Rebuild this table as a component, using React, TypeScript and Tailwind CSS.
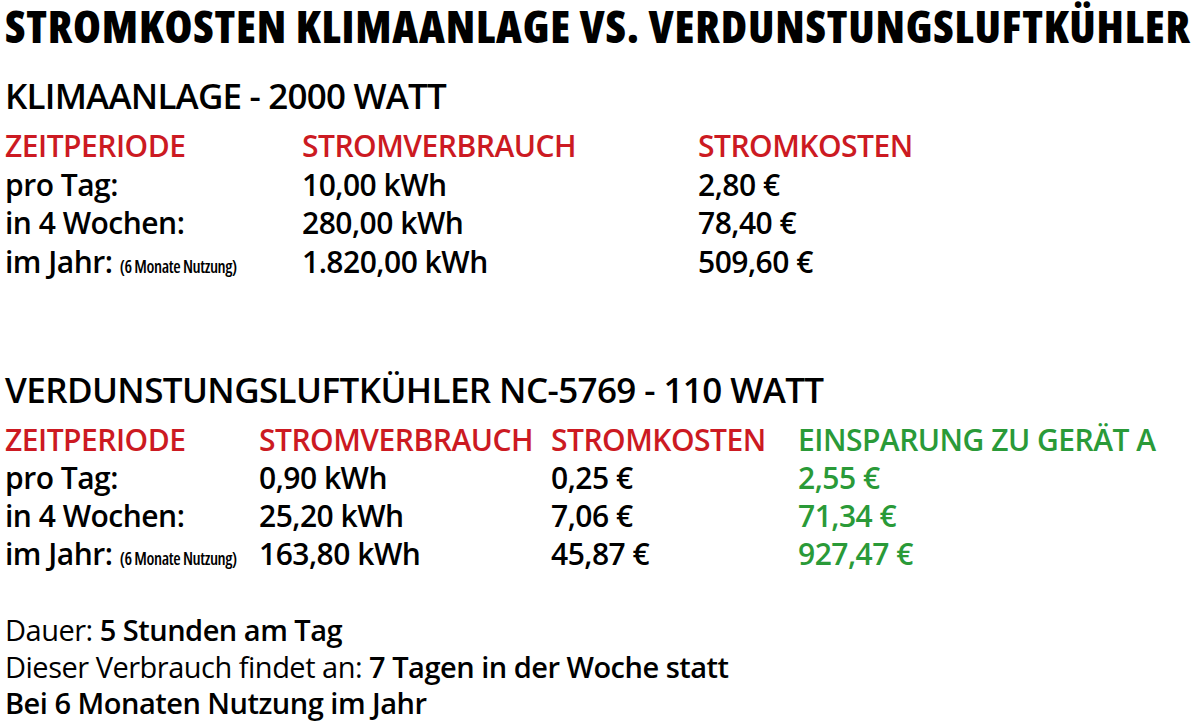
import React from 'react';

const red = 'text-[#cc1a22]';
const green = 'text-[#2a9a38]';

function Small() {
  return (
    <span className="text-[17px] font-semibold tracking-[-0.4px] [font-stretch:75%]">
      (6 Monate Nutzung)
    </span>
  );
}

export default function App() {
  return (
    <div
      className="w-[1200px] h-[725px] bg-white text-black overflow-hidden pl-[5px]"
      style={{ fontFamily: '"Open Sans", "Noto Sans", sans-serif' }}
    >
      <h1 className="text-[45px] font-extrabold leading-[52px] tracking-[0.8px] whitespace-nowrap [font-stretch:87.5%]">
        STROMKOSTEN KLIMAANLAGE VS. VERDUNSTUNGSLUFTKÜHLER
      </h1>

      <h2 className="mt-[24px] text-[35px] font-semibold leading-[40px] tracking-[-0.8px]">
        KLIMAANLAGE - 2000 WATT
      </h2>

      <div className="mt-[11px] grid grid-cols-[297px_396px_1fr] text-[30px] font-semibold leading-[38.5px] tracking-[-0.5px]">
        <div className={red}>ZEITPERIODE</div>
        <div className={red}>STROMVERBRAUCH</div>
        <div className={red}>STROMKOSTEN</div>
        <div>pro Tag:</div>
        <div>10,00 kWh</div>
        <div>2,80 €</div>
        <div>in 4 Wochen:</div>
        <div>280,00 kWh</div>
        <div>78,40 €</div>
        <div className="whitespace-nowrap">im Jahr: <Small /></div>
        <div>1.820,00 kWh</div>
        <div>509,60 €</div>
      </div>

      <h2 className="mt-[84px] text-[35px] font-semibold leading-[40px] tracking-[-0.6px]">
        VERDUNSTUNGSLUFTKÜHLER NC-5769 - 110 WATT
      </h2>

      <div className="mt-[11px] grid grid-cols-[254px_292px_247px_1fr] text-[30px] font-semibold leading-[38px] tracking-[-0.5px]">
        <div className={red}>ZEITPERIODE</div>
        <div className={red}>STROMVERBRAUCH</div>
        <div className={red}>STROMKOSTEN</div>
        <div className={green}>EINSPARUNG ZU GERÄT A</div>
        <div>pro Tag:</div>
        <div>0,90 kWh</div>
        <div>0,25 €</div>
        <div className={green}>2,55 €</div>
        <div>in 4 Wochen:</div>
        <div>25,20 kWh</div>
        <div>7,06 €</div>
        <div className={green}>71,34 €</div>
        <div className="whitespace-nowrap">im Jahr: <Small /></div>
        <div>163,80 kWh</div>
        <div>45,87 €</div>
        <div className={green}>927,47 €</div>
      </div>

      <div className="mt-[34px] text-[29px] leading-[36.5px] tracking-[-0.5px]">
        <div>
          Dauer: <span className="font-semibold">5 Stunden am Tag</span>
        </div>
        <div>
          Dieser Verbrauch findet an: <span className="font-semibold">7 Tagen in der Woche statt</span>
        </div>
        <div className="font-semibold">Bei 6 Monaten Nutzung im Jahr</div>
      </div>
    </div>
  );
}
